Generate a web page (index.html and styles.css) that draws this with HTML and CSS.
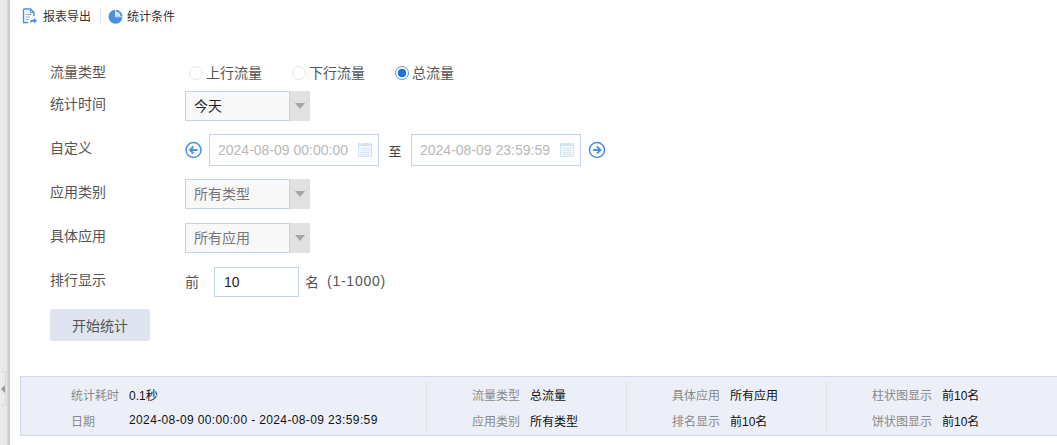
FILE: index.html
```html
<!DOCTYPE html>
<html lang="zh-CN">
<head>
<meta charset="utf-8">
<title>流量统计</title>
<link rel="stylesheet" href="styles.css">
</head>
<body>
<div class="page">
  <aside class="rail"><span class="rail-handle"><span class="rail-arrow"></span></span></aside>
  <main class="main">
    <nav class="toolbar">
      <a class="tool">
        <svg class="tool-icon" width="15" height="16" viewBox="0 0 15 16">
          <path d="M1.500 1h7l3.500 3.500V8M6 14.500H1.500V1" fill="none" stroke="#4a90e2" stroke-width="1.400"/>
          <path d="M8.500 1v3.500H12" fill="none" stroke="#4a90e2" stroke-width="1"/>
          <path d="M3.500 6.500h6M3.500 9h4.500M3.500 11.500h3" stroke="#7fb0ea" stroke-width="1.200"/>
          <path d="M8 15c0-2.500 1.500-3.500 4-3.500V10l3 2.700-3 2.700v-1.700c-1.800 0-3 .3-4 1.300z" fill="#4a90e2"/>
        </svg>
        <span class="tool-text">报表导出</span>
      </a>
      <span class="tool-sep"></span>
      <a class="tool">
        <svg class="tool-icon tool-pie" width="15" height="15" viewBox="0 0 15 15">
          <circle cx="7.500" cy="7.800" r="7" fill="#4a8fe0"/>
          <path d="M8 2.500a5 5 0 0 1 4.500 4.500H8z" fill="#d5e4f8"/>
          <path d="M7.500 0v7.800H15" fill="none" stroke="#fff" stroke-width=".8"/>
        </svg>
        <span class="tool-text">统计条件</span>
      </a>
    </nav>

    <form class="form">
      <div class="row row-radio">
        <span class="label">流量类型</span>
        <div class="radios">
          <span class="radio r1"><i class="dot"></i><span class="radio-text">上行流量</span></span>
          <span class="radio r2"><i class="dot"></i><span class="radio-text">下行流量</span></span>
          <span class="radio"><i class="dot on"></i><span class="radio-text">总流量</span></span>
        </div>
      </div>
      <div class="row">
        <span class="label">统计时间</span>
        <div class="select active"><span class="select-text">今天</span><span class="select-btn"></span></div>
      </div>
      <div class="row">
        <span class="label">自定义</span>
        <svg class="nav-icon" width="18" height="18" viewBox="0 0 18 18">
          <circle cx="8.500" cy="9" r="7.500" fill="none" stroke="#4a90e2" stroke-width="1.500"/>
          <path d="M12.500 9h-7M8.500 5.500 5 9l3.500 3.500" fill="none" stroke="#4a90e2" stroke-width="1.800"/>
        </svg>
        <div class="date"><span>2024-08-09 00:00:00</span>
          <svg class="cal" width="14" height="14" viewBox="0 0 14 14">
            <rect width="14" height="14" fill="#d3e3f6"/>
            <rect x="1" y="3" width="12" height="10" fill="#f3f7fc"/>
            <path d="M3 0v1.500M11 0v1.500" stroke="#fff"/>
            <path d="M2.500 5.500h9M2.500 7.500h9M2.500 9.500h9M2.500 11.500h9" stroke="#d8e5f6"/>
          </svg>
        </div>
        <span class="to">至</span>
        <div class="date"><span>2024-08-09 23:59:59</span>
          <svg class="cal" width="14" height="14" viewBox="0 0 14 14">
            <rect width="14" height="14" fill="#d3e3f6"/>
            <rect x="1" y="3" width="12" height="10" fill="#f3f7fc"/>
            <path d="M3 0v1.500M11 0v1.500" stroke="#fff"/>
            <path d="M2.500 5.500h9M2.500 7.500h9M2.500 9.500h9M2.500 11.500h9" stroke="#d8e5f6"/>
          </svg>
        </div>
        <svg class="nav-icon nav-next" width="18" height="18" viewBox="0 0 18 18">
          <circle cx="9" cy="9" r="7.500" fill="none" stroke="#4a90e2" stroke-width="1.500"/>
          <path d="M5 9h7M9 5.500 12.500 9 9 12.500" fill="none" stroke="#4a90e2" stroke-width="1.800"/>
        </svg>
      </div>
      <div class="row">
        <span class="label">应用类别</span>
        <div class="select"><span class="select-text">所有类型</span><span class="select-btn"></span></div>
      </div>
      <div class="row">
        <span class="label">具体应用</span>
        <div class="select"><span class="select-text">所有应用</span><span class="select-btn"></span></div>
      </div>
      <div class="row">
        <span class="label">排行显示</span>
        <span class="plain">前</span>
        <div class="count">10</div>
        <span class="plain rank">名</span>
        <span class="plain range">(1-1000)</span>
      </div>
      <button class="start" type="button">开始统计</button>
    </form>

    <section class="summary">
      <div class="sum-col sum-first">
        <div class="sum-row"><span class="k">统计耗时</span><span class="v">0.1秒</span></div>
        <div class="sum-row"><span class="k">日期</span><span class="v v-date">2024-08-09 00:00:00 - 2024-08-09 23:59:59</span></div>
      </div>
      <div class="sum-col">
        <div class="sum-row"><span class="k">流量类型</span><span class="v">总流量</span></div>
        <div class="sum-row"><span class="k">应用类别</span><span class="v">所有类型</span></div>
      </div>
      <div class="sum-col">
        <div class="sum-row"><span class="k">具体应用</span><span class="v">所有应用</span></div>
        <div class="sum-row"><span class="k">排名显示</span><span class="v">前10名</span></div>
      </div>
      <div class="sum-col sum-wide">
        <div class="sum-row"><span class="k">柱状图显示</span><span class="v">前10名</span></div>
        <div class="sum-row"><span class="k">饼状图显示</span><span class="v">前10名</span></div>
      </div>
    </section>
  </main>
</div>
</body>
</html>
```

FILE: styles.css
```css
* { box-sizing: border-box; }
html, body { margin: 0; height: 100%; overflow: hidden; background: #fff; }
body { font: 14px "Liberation Sans", "Noto Sans CJK SC", sans-serif; color: #444; }

.page { display: flex; height: 445px; }
.rail {
  position: relative;
  flex: 0 0 10px;
  background: linear-gradient(to right, #ececec 0, #e6e6e6 7px, #c9c9c9 8px, #d2d2d2 10px);
}
.rail-handle {
  position: absolute;
  left: 1px;
  top: 371px;
  width: 5px;
  height: 35px;
  border: 1px solid #d5d9e8;
  border-left: 0;
  display: flex;
  align-items: center;
}
.rail-arrow {
  width: 0;
  height: 0;
  border: 4px solid transparent;
  border-left: 0;
  border-right: 4px solid #9a9a9a;
}

.main { flex: 1; min-width: 0; display: flex; flex-direction: column; }

.toolbar { display: flex; align-items: center; height: 32px; padding-left: 12px; font-size: 12px; color: #333; }
.tool { display: flex; align-items: center; }
.tool-icon { margin-right: 6px; }
.tool-pie { margin-right: 4px; }
.tool-text { padding-bottom: 2px; }
.tool-sep { width: 1px; height: 16px; background: #e8e8e8; margin: 0 7px 0 9px; }

.form { padding: 30px 0 0 40px; }
.row { display: flex; align-items: center; height: 44px; }
.row-radio { height: 22px; }
.label { flex: 0 0 135px; margin-bottom: 6px; color: #555; }
.row-radio .label { margin-bottom: 4px; }

.radios { display: flex; padding-left: 4px; }
.radio { display: flex; align-items: center; color: #555; }
.radio-text { padding-bottom: 2px; }
.r1 { width: 103px; }
.r2 { width: 103px; }
.dot { width: 14px; height: 14px; border: 1px solid #e6e6e6; border-radius: 50%; margin-right: 3px; background: #fff; }
.dot.on { border-color: #5b9be6; background: radial-gradient(circle, #1f74d8 0 4px, #fff 4.6px); }

.select { display: flex; width: 125px; height: 30px; }
.select-text {
  flex: 1;
  background: #f8f8f8;
  border: 1px solid #c5d3e6;
  padding-left: 8px;
  line-height: 28px;
  color: #777;
}
.select.active .select-text { color: #222; }
.select-btn { flex: 0 0 20px; background: #e1e1e1; display: flex; align-items: center; justify-content: center; }
.select-btn::after {
  content: "";
  border: 5px solid transparent;
  border-bottom: 0;
  border-top: 6px solid #a5a5a5;
}

.nav-icon { margin-right: 6px; flex: none; }
.nav-next { margin: 0 0 0 7px; }
.date {
  display: flex;
  align-items: center;
  justify-content: space-between;
  width: 170px;
  height: 32px;
  border: 1px solid #c5d3e6;
  padding: 0 6px 0 8px;
  color: #b9b9b9;
}
.to { width: 32px; text-align: center; font-size: 13px; color: #444; }

.plain { color: #555; margin-bottom: 3px; }
.count {
  width: 85px;
  height: 30px;
  margin: 0 6px 0 15px;
  padding-left: 9px;
  border: 1px solid #c5d3e6;
  line-height: 28px;
  color: #222;
}
.rank { margin-right: 8px; }
.range { letter-spacing: .75px; }

.start {
  display: block;
  width: 100px;
  height: 32px;
  margin-top: 5px;
  border: 0;
  border-radius: 2px;
  background: #dfe4f0;
  font: inherit;
  color: #555;
}

.summary {
  display: grid;
  grid-template-columns: 406px 200px 200px 1fr;
  align-items: start;
  height: 60px;
  margin: 35px 0 0 10px;
  padding-top: 5px;
  background: #eceff7;
  border: 1px solid #d2d9ec;
  border-right: 0;
  font-size: 12px;
}
.sum-col { height: 52px; padding-left: 45px; border-right: 1px solid #dcdfe6; }
.sum-first { padding-left: 50px; }
.sum-wide { border-right: 0; }
.sum-row { display: flex; align-items: center; height: 26px; padding-bottom: 2px; }
.k { flex: 0 0 48px; margin-right: 10px; color: #8a8a8a; }
.sum-wide .k { flex-basis: 60px; }
.v { color: #111; }
.v-date { letter-spacing: .37px; }
```
